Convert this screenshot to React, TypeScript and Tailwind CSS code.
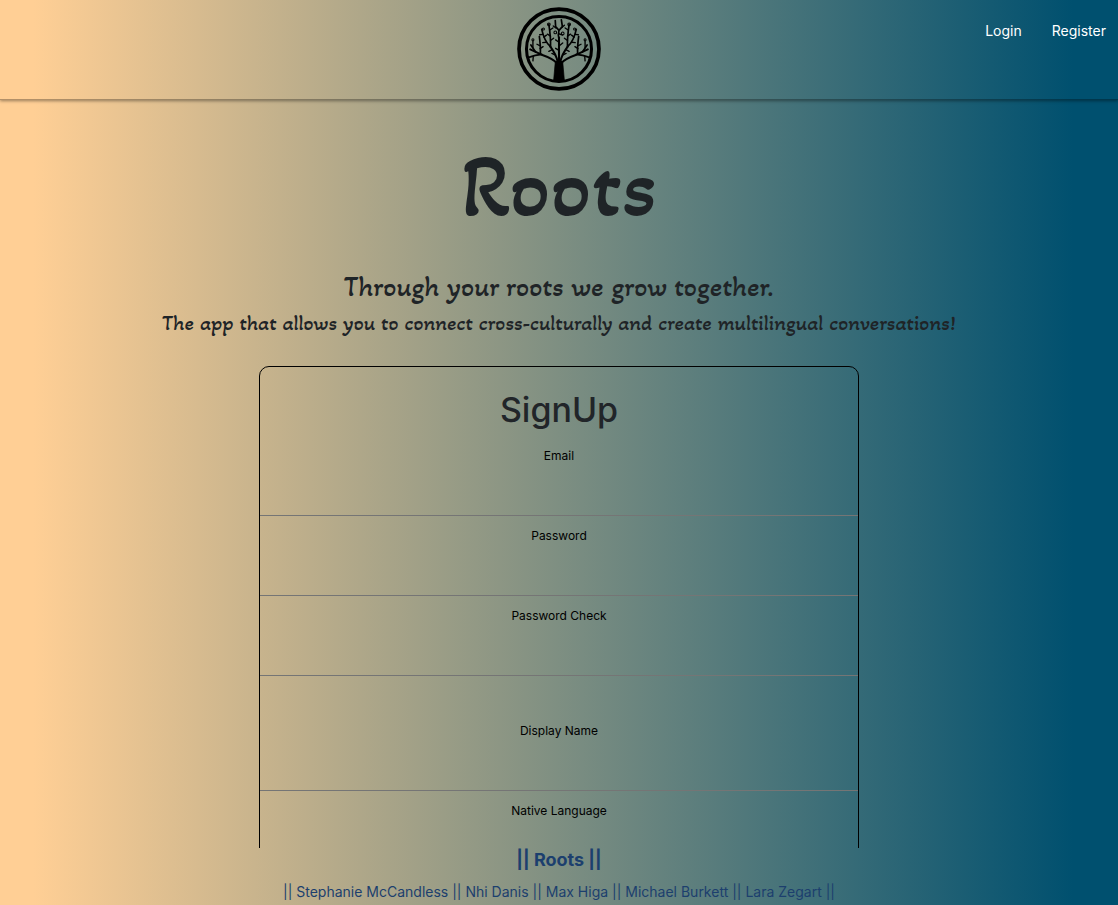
import React from "react";

type FieldProps = { id: string; label: string; type?: string; spaced?: boolean };

function Field({ id, label, type = "text", spaced = false }: FieldProps) {
  return (
    <div className={spaced ? "flex flex-col pt-[35px]" : "flex flex-col"}>
      <label htmlFor={id} className="pt-3 text-center text-xs leading-4 text-black">
        {label}
      </label>
      <input
        id={id}
        name={id}
        type={type}
        className="h-[52px] w-full border-b border-[#757575] bg-transparent px-3 text-center text-base outline-none"
      />
    </div>
  );
}

function TreeLogo() {
  return (
    <svg viewBox="25 22 248 248" className="size-[84px]" role="img" aria-label="Roots home" fill="none" stroke="#000" strokeLinecap="round" strokeLinejoin="round">
      <circle cx="149" cy="146" r="118" strokeWidth="11" />
      <circle cx="149" cy="146" r="96" strokeWidth="9" />
      <path d="M133 240 L138 184 Q149 176 160 184 L165 240 Q149 246 133 240Z" fill="#000" strokeWidth="2" />
      <g strokeWidth="6">
        <path d="M143 188 Q133 175 96 162 L64 147" />
        <path d="M155 188 Q166 175 202 162 L234 147" />
        <path d="M145 184 Q142 164 123 138" />
        <path d="M153 184 Q156 164 175 138" />
        <path d="M149 186V112" />
      </g>
      <g strokeWidth="5">
        <path d="M80 155 L66 134 M98 162 Q78 164 62 170 M94 160 Q95 140 91 109" />
        <path d="M218 155 L232 134 M200 162 Q220 164 236 170 M204 160 Q203 140 207 109" />
        <path d="M124 140 Q125 112 119 73 M123 138 Q106 124 98 88" />
        <path d="M174 140 Q173 112 179 73 M175 138 Q192 124 200 88" />
        <path d="M149 116 Q145 105 149 91 M149 91 L139 80 L138 62 M149 91 L159 80 L156 60" />
      </g>
      <g strokeWidth="4">
        <path d="M73 169 L72 181 M93 145 L102 139 M92 136 L84 132 M72 142 L72 124" />
        <path d="M225 169 L226 181 M205 145 L196 139 M206 136 L214 132 M226 142 L226 124" />
        <path d="M111 126 L101 127 M104 111 L112 105 M101 103 L92 104 M124 121 L133 114 M124 108 L115 102 M122 90 L131 84 M129 148 L119 153 M137 163 L128 159" />
        <path d="M187 126 L197 127 M194 111 L186 105 M197 103 L206 104 M174 121 L165 114 M174 108 L183 102 M176 90 L167 84 M169 148 L179 153 M161 163 L170 159" />
        <path d="M149 150 L139 144 M149 137 L160 128 M149 126 L139 119 M148 101 L160 105 M140 84 L132 78 M158 82 L165 76" />
      </g>
      <g strokeWidth="3">
        <circle cx="103" cy="87" r="3" /><circle cx="119" cy="73" r="4" /><circle cx="179" cy="73" r="4" /><circle cx="195" cy="87" r="3" />
        <circle cx="72" cy="119" r="3" /><circle cx="226" cy="119" r="3" /><circle cx="138" cy="97" r="4" /><circle cx="160" cy="100" r="4" />
      </g>
    </svg>
  );
}

export default function App() {
  return (
    <div className="flex h-screen flex-col bg-linear-to-r/srgb from-[#ffcf95] from-3% to-[#00506f] to-96% font-[Inter,sans-serif] text-[#212529]">
      <header className="grid shrink-0 grid-cols-3 items-start border-b border-black/30 px-3 pt-[7px] pb-2 shadow-[0_1px_3px_rgba(0,0,0,0.4)]">
        <a href="#home" className="col-start-2 justify-self-center">
          <TreeLogo />
        </a>
        <nav className="flex justify-end gap-[30px] pt-3 text-sm leading-6 text-white">
          <a href="#login">Login</a>
          <a href="#register">Register</a>
        </nav>
      </header>
      <main className="flex min-h-0 flex-1 flex-col items-center overflow-y-auto [scrollbar-width:none]">
        <div className="flex flex-col items-center text-center font-['Akaya_Kanadaka',Lato,sans-serif] text-[#1f2427]">
          <h1 className="pt-[38px] text-[90px] leading-[96px] font-medium">Roots</h1>
          <h2 className="pt-[33px] text-[29px] leading-10 font-medium">Through your roots we grow together.</h2>
          <h3 className="text-[22px] leading-8 font-medium">
            The app that allows you to connect cross-culturally and create multilingual conversations!
          </h3>
        </div>
        <form className="mt-[27px] w-full max-w-[600px] shrink-0 rounded-[10px] border border-black pb-6">
          <h2 className="pt-[19px] pb-0.5 text-center text-[34px] leading-[48px] font-medium">SignUp</h2>
          <Field id="email" label="Email" type="email" />
          <Field id="password" label="Password" type="password" />
          <Field id="password-check" label="Password Check" type="password" />
          <Field id="display-name" label="Display Name" spaced />
          <Field id="native-language" label="Native Language" />
        </form>
      </main>
      <footer className="flex shrink-0 flex-col items-center gap-2 pb-px text-center text-[#1c3f6e]">
        <p className="text-lg leading-6 font-bold">|| Roots ||</p>
        <p className="text-sm leading-6">
          || Stephanie McCandless || Nhi Danis || Max Higa || Michael Burkett || Lara Zegart ||
        </p>
      </footer>
    </div>
  );
}
